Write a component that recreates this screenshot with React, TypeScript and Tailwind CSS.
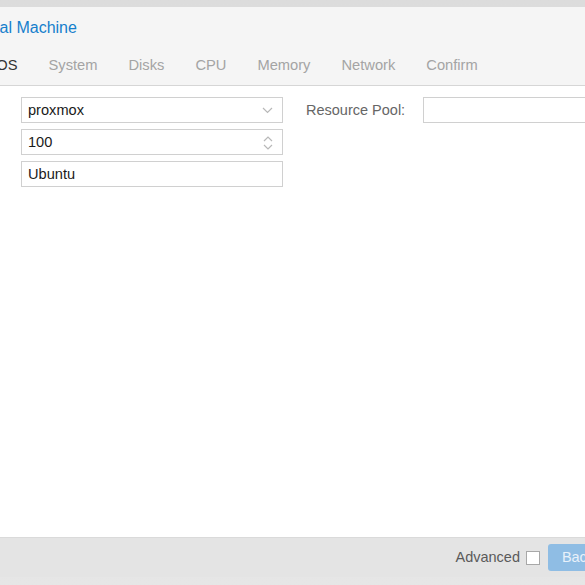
import React from "react";

const font = { fontFamily: '"Liberation Sans", Arial, Helvetica, sans-serif' };

function Chevron() {
  return (
    <svg width="11" height="7" viewBox="0 0 11 7" className="shrink-0">
      <polyline points="1,1 5.5,5.5 10,1" fill="none" stroke="#b8b8b8" strokeWidth="1.2" />
    </svg>
  );
}

function Spinner() {
  return (
    <svg width="10" height="16" viewBox="0 0 10 16" className="shrink-0">
      <polyline points="1,6 5,2 9,6" fill="none" stroke="#b8b8b8" strokeWidth="1.2" />
      <polyline points="1,10 5,14 9,10" fill="none" stroke="#b8b8b8" strokeWidth="1.2" />
    </svg>
  );
}

function Field({ value, trigger }: { value: string; trigger?: React.ReactNode }) {
  return (
    <div className="flex h-[26px] w-[262px] items-center border border-[#d0d0d0] bg-white pt-[1px] pl-[6px] pr-[9px] text-[14.6px] text-[#1a1a1a]">
      <span className="flex-1">{value}</span>
      {trigger}
    </div>
  );
}

export default function App() {
  const tabs = ["General", "OS", "System", "Disks", "CPU", "Memory", "Network", "Confirm"];
  return (
    <div className="h-[585px] w-[585px] overflow-hidden bg-gradient-to-b from-[#dcdcdc] to-[#e6e6e6]" style={font}>
      <div className="mt-[7px] ml-[-100px] flex h-[570px] w-[785px] flex-col bg-white">
        <div className="flex h-[79px] flex-col border-b border-[#d6d6d6] bg-[#f5f5f5]">
          <div className="pt-[11px] pl-[10px] text-[16px] leading-[20px] text-[#157fcc]">Create: Virtual Machine</div>
          <div className="mt-[18px] flex gap-[31px] pl-[13px] text-[14.7px] leading-[18px]">
            {tabs.map((t, i) => (
              <span key={t} className={i < 2 ? "text-[#333333]" : "text-[#a4a4a4]"}>
                {t}
              </span>
            ))}
          </div>
        </div>
        <div className="flex flex-1 gap-[23px] pt-[11px] pl-[11px] text-[14.5px]">
          <div className="flex flex-col gap-[6px]">
            <div className="flex items-center">
              <span className="w-[110px] text-[#666666]">Node:</span>
              <Field value="proxmox" trigger={<Chevron />} />
            </div>
            <div className="flex items-center">
              <span className="w-[110px] text-[#666666]">VM ID:</span>
              <Field value="100" trigger={<Spinner />} />
            </div>
            <div className="flex items-center">
              <span className="w-[110px] text-[#666666]">Name:</span>
              <Field value="Ubuntu" />
            </div>
          </div>
          <div className="flex flex-col">
            <div className="flex items-center">
              <span className="w-[117px] pt-[1px] text-[#666666]">Resource Pool:</span>
              <Field value="" trigger={<Chevron />} />
            </div>
          </div>
        </div>
        <div className="flex h-[40px] items-center justify-end border-t border-[#dadada] bg-[#e4e4e4] pr-[8px] text-[14.5px]">
          <span className="text-[#5a5a5a]">Advanced</span>
          <span className="ml-[6px] h-[14px] w-[14px] border border-[#a8a8a8] bg-white" />
          <button className="ml-[8px] h-[27px] w-[60px] rounded-[3px] bg-[#8fbde4] text-[14.5px] text-[#e8f1fa]">Back</button>
          <button className="ml-[9px] h-[27px] w-[60px] rounded-[3px] bg-[#3892d4] text-[14.5px] text-white">Next</button>
        </div>
      </div>
    </div>
  );
}
